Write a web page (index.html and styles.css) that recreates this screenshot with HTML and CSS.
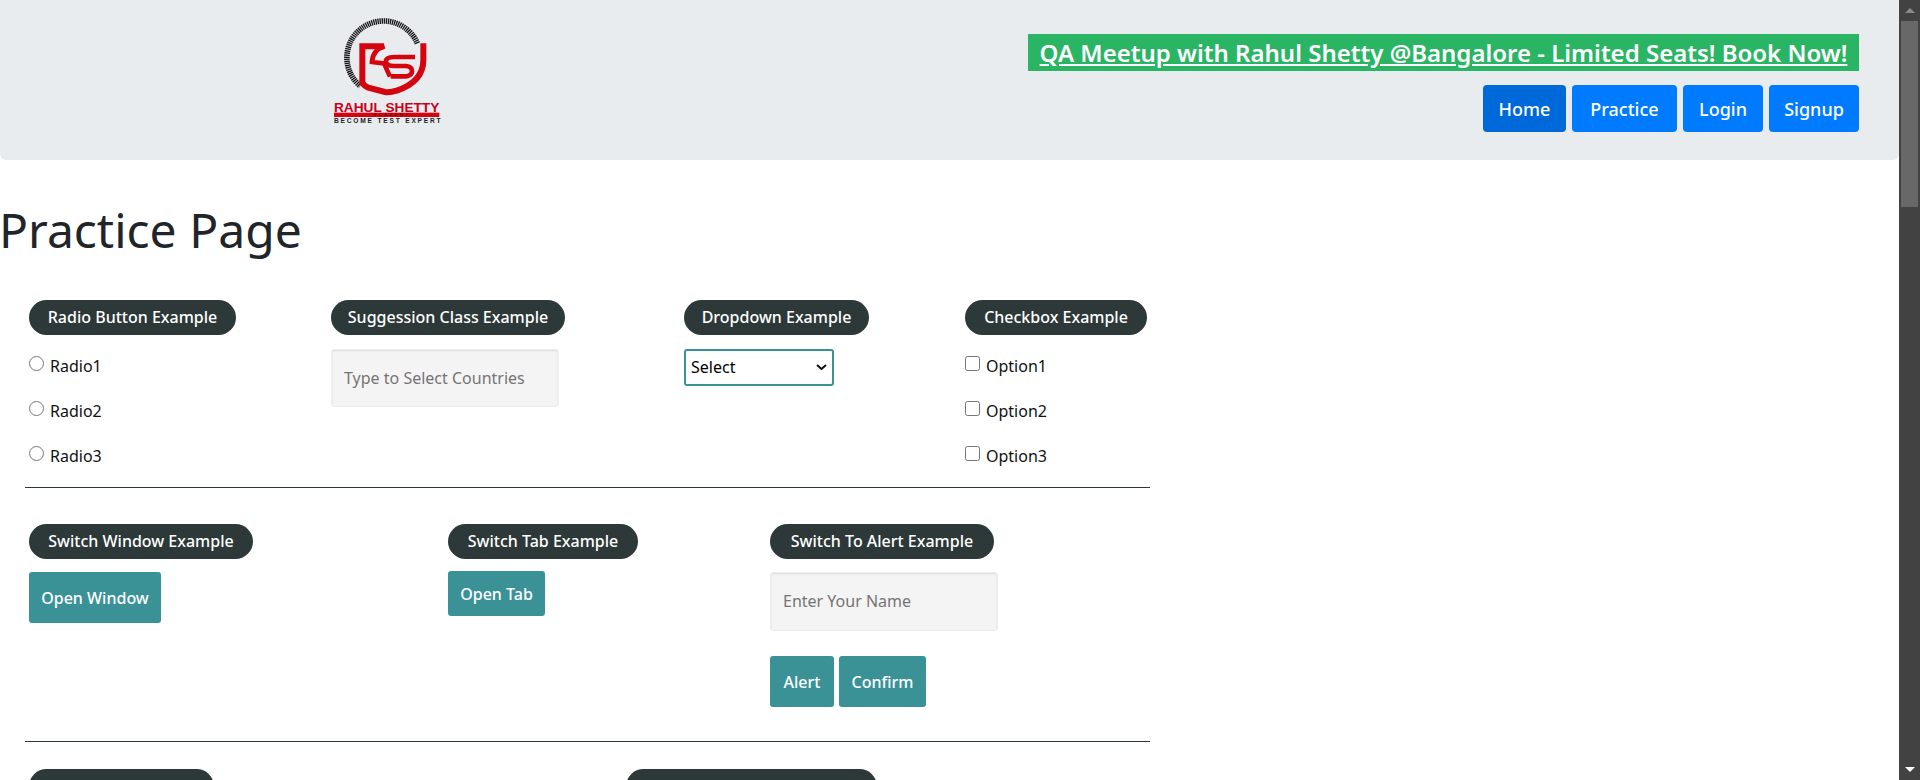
FILE: index.html
```html
<!DOCTYPE html>
<html lang="en">
<head>
<meta charset="utf-8">
<title>Practice Page</title>
<link rel="stylesheet" href="styles.css">
</head>
<body>
<div class="viewport">
  <main class="page">
    <header class="jumbo">
      <svg class="logo" viewBox="0 0 540 420" aria-label="Rahul Shetty Academy">
        <path class="ticks" d="M352 130A110 110 0 1 0 181 258"/>
        <path class="shield" d="M178 139H252M187 130V246Q189 256 205 263L255 276Q270 278 290 272Q370 245 370 180V130"/>
        <path class="rs" d="M254 139Q218 150 216 186L252 190L270 230"/>
        <path class="rs" d="M345 171H282Q258 171 258 184Q258 198 280 198H318Q336 200 336 213Q336 227 318 229H272"/>
        <text class="logo-name" x="102" y="335" textLength="316" lengthAdjust="spacingAndGlyphs">RAHUL SHETTY</text>
        <rect class="logo-bar" x="102" y="338" width="316" height="13"/>
        <text class="logo-mini" x="220" y="349" textLength="104">ACADEMY</text>
        <text class="logo-sub" x="102" y="370" textLength="320">BECOME TEST EXPERT</text>
      </svg>
      <div class="jumbo-right">
        <a class="banner" href="#">QA Meetup with Rahul Shetty @Bangalore - Limited Seats! Book Now!</a>
        <nav class="nav">
          <a class="nav-btn nav-active" href="#">Home</a>
          <a class="nav-btn" href="#">Practice</a>
          <a class="nav-btn" href="#">Login</a>
          <a class="nav-btn" href="#">Signup</a>
        </nav>
      </div>
    </header>

    <h1 class="title">Practice Page</h1>

    <section class="row row-one">
      <div class="cell">
        <span class="legend lg-radio">Radio Button Example</span>
        <label class="option"><input type="radio" name="r"><span>Radio1</span></label>
        <label class="option"><input type="radio" name="r"><span>Radio2</span></label>
        <label class="option"><input type="radio" name="r"><span>Radio3</span></label>
      </div>
      <div class="cell">
        <span class="legend lg-suggest">Suggession Class Example</span>
        <input class="field" type="text" placeholder="Type to Select Countries">
      </div>
      <div class="cell">
        <span class="legend lg-drop">Dropdown Example</span>
        <div class="select-wrap">
          <select class="select"><option>Select</option></select>
          <svg class="chevron" width="11" height="6" viewBox="0 0 11 6"><path d="M1 1L5.5 5L10 1"/></svg>
        </div>
      </div>
      <div class="cell">
        <span class="legend lg-check">Checkbox Example</span>
        <label class="option"><input type="checkbox"><span>Option1</span></label>
        <label class="option"><input type="checkbox"><span>Option2</span></label>
        <label class="option"><input type="checkbox"><span>Option3</span></label>
      </div>
    </section>
    <hr class="rule">
    <section class="row row-two">
      <div class="cell">
        <span class="legend lg-window">Switch Window Example</span>
        <button class="btn btn-window">Open Window</button>
      </div>
      <div class="cell">
        <span class="legend lg-tab">Switch Tab Example</span>
        <button class="btn btn-tab">Open Tab</button>
      </div>
      <div class="cell">
        <span class="legend lg-alert">Switch To Alert Example</span>
        <input class="field field-name" type="text" placeholder="Enter Your Name">
        <div class="btn-pair">
          <button class="btn btn-alert">Alert</button>
          <button class="btn btn-confirm">Confirm</button>
        </div>
      </div>
    </section>
    <hr class="rule rule-two">
    <section class="row row-three">
      <div class="cell"><span class="legend lg-table">Web Table Example</span></div>
      <div class="cell"><span class="legend lg-shown">Element Displayed Example</span></div>
    </section>
  </main>
  <aside class="scrollbar" aria-hidden="true">
    <div class="sb-cap"><svg width="10" height="5" viewBox="0 0 10 5"><path class="sb-up" d="M5 0L10 5H0Z"/></svg></div>
    <div class="sb-track"><div class="sb-thumb"></div></div>
    <div class="sb-cap"><svg width="10" height="5" viewBox="0 0 10 5"><path class="sb-down" d="M0 0H10L5 5Z"/></svg></div>
  </aside>
</div>
</body>
</html>
```
FILE: styles.css
```css
* { box-sizing: border-box; }
html, body { margin: 0; height: 780px; overflow: hidden; background: #fff; }
body { font-family: "Noto Sans", "Open Sans", sans-serif; font-size: 16px; color: #212529; }
.viewport { display: flex; height: 780px; }
.page { width: 1899px; flex: none; overflow: hidden; }

.jumbo { height: 160px; background: #e9ecef; border-radius: 0 0 6px 6px; display: flex; justify-content: space-between; padding: 0 40px 0 300px; }
.logo { width: 180px; height: 140px; flex: none; }
.ticks { fill: none; stroke: #141414; stroke-width: 17; stroke-dasharray: 4 2.2; }
.shield { fill: none; stroke: #d4050f; stroke-width: 18; }
.rs { fill: none; stroke: #d4050f; stroke-width: 14; }
.logo-name { font-family: "Liberation Sans", sans-serif; font-size: 41px; font-weight: 700; fill: #c8001a; }
.logo-bar { fill: #d4050f; }
.logo-mini { font-family: "Liberation Sans", sans-serif; font-size: 12px; font-weight: 700; fill: #5c1010; }
.logo-sub { font-family: "Liberation Sans", sans-serif; font-size: 20px; font-weight: 700; fill: #222; }

.jumbo-right { display: flex; flex-direction: column; align-items: flex-end; padding-top: 34px; }
.banner { display: block; height: 37px; width: 831px; background: #2ab565; color: #fff; font-size: 24px; font-weight: 600; line-height: 37px; text-align: center; white-space: nowrap; }
.nav { display: flex; gap: 6px; margin-top: 14px; }
.nav-btn { height: 47px; display: flex; align-items: center; justify-content: center; background: #007bff; color: #fff; border-radius: 4px; text-decoration: none; font-size: 18px; font-weight: 500; width: 90px; }
.nav-active { background: #0069d9; width: 83px; }
.nav-btn:nth-child(2) { width: 105px; }
.nav-btn:nth-child(3) { width: 80px; }

.title { margin: 0 0 0 -1px; padding-top: 41px; height: 140px; font-size: 48px; font-weight: 400; line-height: 58px; color: #212529; }

.row { display: grid; margin-left: 29px; width: 1121px; }
.row-one { grid-template-columns: 302px 353px 281px 1fr; height: 187px; }
.row-two { grid-template-columns: 419px 322px 1fr; height: 217px; margin-top: 36px; }
.row-three { grid-template-columns: 597px 1fr; margin-top: 27px; }
.cell { min-width: 0; }

.legend { display: block; height: 35px; line-height: 35px; text-align: center; border-radius: 18px; background: #2d3838; color: #fff; font-size: 16px; font-weight: 500; white-space: nowrap; }
.lg-radio { width: 207px; }
.lg-suggest { width: 234px; }
.lg-drop { width: 185px; }
.lg-check { width: 182px; }
.lg-window { width: 224px; }
.lg-tab { width: 190px; }
.lg-alert { width: 224px; }
.lg-table { width: 185px; }
.lg-shown { width: 251px; }

.option { display: flex; align-items: center; height: 45px; font-size: 16px; color: #111; gap: 6px; }
.cell .legend + .option { margin-top: 8px; }
.option input { margin: 0 0 5px; width: 15px; height: 15px; }
.field { display: block; width: 228px; height: 58px; margin-top: 14px; padding: 0 12px; background: #f4f4f4; border: 1px solid #eee; border-radius: 3px; box-shadow: inset 0 1px 2px rgba(0,0,0,.1); font: 16px "Noto Sans", sans-serif; }
.field-name { margin-top: 13px; height: 59px; padding-bottom: 2px; }
.field::placeholder { color: #757575; }
.select-wrap { position: relative; width: 150px; margin-top: 14px; }
.select { display: block; width: 150px; height: 37px; appearance: none; border: 2px solid #3a9297; border-radius: 3px; background: #fff; color: #000; padding: 0 5px 2px; font: 16px "Noto Sans", sans-serif; }
.chevron { position: absolute; right: 7px; top: 15px; }
.chevron path { fill: none; stroke: #111; stroke-width: 2; }

.btn { display: block; border: 0; border-radius: 3px; background: #3a9297; color: #fff; font: 500 16px "Noto Sans", sans-serif; padding: 0; margin: 0; }
.btn-window { width: 132px; height: 51px; margin-top: 13px; }
.btn-tab { width: 97px; height: 45px; margin-top: 12px; }
.btn-pair { display: flex; gap: 5px; margin-top: 25px; }
.btn-alert { width: 64px; height: 51px; }
.btn-confirm { width: 87px; height: 51px; }

.rule { margin: 0 0 0 25px; width: 1125px; height: 1px; border: 0; background: #2d3838; }

.scrollbar { width: 21px; flex: none; display: flex; flex-direction: column; background: #424242; }
.sb-cap { height: 21px; display: flex; align-items: center; justify-content: center; }
.sb-up { fill: #8a8a8a; }
.sb-down { fill: #fff; }
.sb-track { flex: 1; padding: 0 2px; }
.sb-thumb { height: 186px; background: #686868; }
```
